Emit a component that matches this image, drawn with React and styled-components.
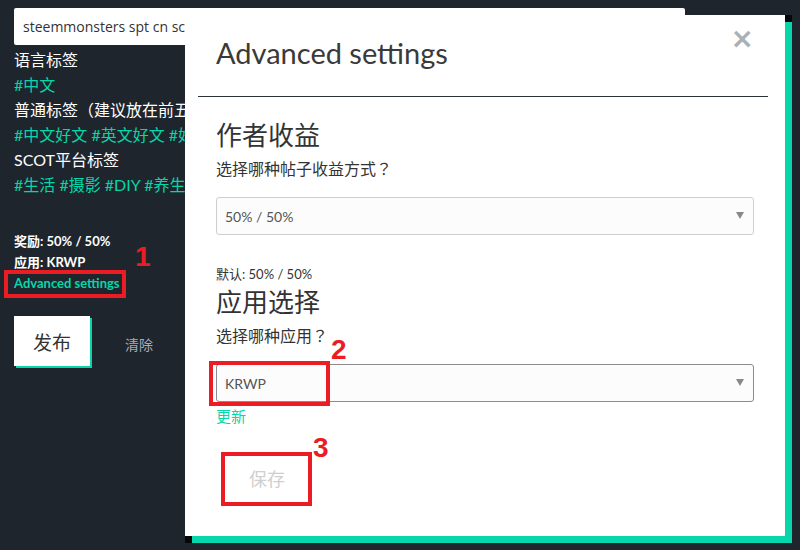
import React from 'react';
import styled, { createGlobalStyle } from 'styled-components';

const GREEN = '#06d6a9';
const RED = '#ec1c24';

const Global = createGlobalStyle`
  html, body {
    margin: 0;
    background: #1e252d;
    font-family: Lato, "Noto Sans CJK SC", sans-serif;
  }
`;

const Page = styled.div`
  position: relative;
  width: 800px;
  height: 550px;
  overflow: hidden;
  background: #1e252d;
  padding: 8px 0 0 14px;
  box-sizing: border-box;
`;

const TagInput = styled.div`
  width: 671px;
  height: 37px;
  background: #fff;
  border-radius: 2px;
  box-sizing: border-box;
  padding: 0 9px;
  display: flex;
  align-items: center;
  font-size: 14px;
  color: #333;
  font-family: "Open Sans", sans-serif;
`;

const Lines = styled.div`
  margin-top: 2px;
  display: flex;
  flex-direction: column;
`;

const Line = styled.div`
  height: 25px;
  line-height: 25px;
  font-size: 16px;
  color: ${p => (p.$tag ? GREEN : '#fff')};
  white-space: nowrap;
`;

const Meta = styled.div`
  margin-top: 34px;
  display: flex;
  flex-direction: column;
`;

const MetaLine = styled.div`
  height: 21px;
  line-height: 21px;
  font-size: 13px;
  font-weight: 700;
  color: ${p => (p.$link ? GREEN : '#fff')};
`;

const Actions = styled.div`
  margin-top: 22px;
  display: flex;
  align-items: center;
  gap: 35px;
`;

const PostButton = styled.div`
  width: 76px;
  height: 50px;
  background: #fff;
  box-shadow: 2px 2px 0 ${GREEN};
  display: flex;
  align-items: center;
  justify-content: center;
  font-size: 19px;
  color: #333;
`;

const ClearButton = styled.div`
  font-size: 14px;
  color: #aab;
  margin-top: 5px;
`;

const Modal = styled.div`
  position: absolute;
  left: 185px;
  top: 15px;
  width: 600px;
  height: 521px;
  background: #fff;
  box-shadow: 7px 7px 0 ${GREEN};
  &::before, &::after {
    content: '';
    position: absolute;
    width: 7px;
    height: 7px;
    background: #050709;
  }
  &::before { right: -7px; top: 0; }
  &::after { left: 0; bottom: -7px; }
`;

const Header = styled.div`
  height: 81px;
  padding: 0 31px;
  display: flex;
  align-items: center;
  justify-content: space-between;
  box-sizing: border-box;
`;

const Title = styled.h2`
  margin: -6px 0 0;
  font-size: 29px;
  font-weight: 400;
  color: #3a3a3a;
`;

const Close = styled.div`
  align-self: flex-start;
  margin-top: 14px;
  font-size: 28px;
  line-height: 20px;
  font-weight: 700;
  color: #a9b1b8;
  font-family: "DejaVu Sans", sans-serif;
`;

const Divider = styled.hr`
  margin: 0 17px 0 13px;
  border: 0;
  border-top: 1px solid #2b3138;
`;

const Body = styled.div`
  padding: 23px 31px 0;
  display: flex;
  flex-direction: column;
`;

const Section = styled.h3`
  margin: ${p => p.$mt || 0}px 0 0;
  font-size: 26px;
  line-height: 30px;
  font-weight: 400;
  color: #333;
`;

const Label = styled.div`
  margin-top: 9px;
  height: 20px;
  font-size: 16px;
  line-height: 20px;
  color: #333;
`;

const FullQ = styled.span`
  font-family: "Noto Sans CJK TC", sans-serif;
  line-height: 1;
`;

const Select = styled.div`
  position: relative;
  margin-top: 18px;
  height: 38px;
  box-sizing: border-box;
  border: 1px solid ${p => (p.$focus ? '#8c8c8c' : '#cfcfcf')};
  border-radius: 3px;
  background: #fcfcfc;
  display: flex;
  align-items: center;
  justify-content: space-between;
  padding: 0 9px 0 8px;
  font-size: 14px;
  color: #555;
`;

const Arrow = styled.span`
  width: 0;
  height: 0;
  border-left: 4px solid transparent;
  border-right: 4px solid transparent;
  border-top: 7px solid #888;
  margin-top: -2px;
`;

const Note = styled.div`
  margin-top: 30px;
  font-size: 13px;
  line-height: 18px;
  color: #333;
`;

const UpdateLink = styled.div`
  margin-top: 4px;
  font-size: 15px;
  line-height: 20px;
  color: ${GREEN};
`;

const SaveButton = styled.div`
  margin-top: 38px;
  margin-left: 6px;
  width: 90px;
  height: 28px;
  display: flex;
  align-items: center;
  justify-content: center;
  font-size: 18px;
  color: #cfcfcf;
`;

const Mark = styled.div`
  position: absolute;
  border: 4px solid ${RED};
  box-sizing: border-box;
  pointer-events: none;
`;

const MarkNum = styled.div`
  position: absolute;
  color: ${RED};
  font-family: "Liberation Sans", Arial, sans-serif;
  font-weight: 700;
  font-size: 28px;
  line-height: 1;
`;

export default function App() {
  return (
    <>
      <Global />
      <Page>
        <TagInput>steemmonsters spt cn sct kr cn-reader</TagInput>
        <Lines>
          <Line>语言标签</Line>
          <Line $tag>#中文</Line>
          <Line>普通标签（建议放在前五位）</Line>
          <Line $tag>#中文好文 #英文好文 #好文</Line>
          <Line>SCOT平台标签</Line>
          <Line $tag>#生活 #摄影 #DIY #养生</Line>
        </Lines>
        <Meta>
          <MetaLine>奖励: 50% / 50%</MetaLine>
          <MetaLine>应用: KRWP</MetaLine>
          <MetaLine $link>Advanced settings</MetaLine>
        </Meta>
        <Actions>
          <PostButton>发布</PostButton>
          <ClearButton>清除</ClearButton>
        </Actions>

        <Modal>
          <Header>
            <Title>Advanced settings</Title>
            <Close>×</Close>
          </Header>
          <Divider />
          <Body>
            <Section>作者收益</Section>
            <Label>选择哪种帖子收益方式<FullQ>？</FullQ></Label>
            <Select>
              <span>50% / 50%</span>
              <Arrow />
            </Select>
            <Note>默认: 50% / 50%</Note>
            <Section $mt={4}>应用选择</Section>
            <Label>选择哪种应用<FullQ>？</FullQ></Label>
            <Select $focus>
              <span>KRWP</span>
              <Arrow />
            </Select>
            <UpdateLink>更新</UpdateLink>
            <SaveButton>保存</SaveButton>
          </Body>
        </Modal>

        <Mark style={{ left: 4, top: 270, width: 122, height: 28 }} />
        <MarkNum style={{ left: 135, top: 243 }}>1</MarkNum>
        <Mark style={{ left: 209, top: 361, width: 121, height: 45 }} />
        <MarkNum style={{ left: 331, top: 336 }}>2</MarkNum>
        <Mark style={{ left: 221, top: 452, width: 91, height: 54 }} />
        <MarkNum style={{ left: 313, top: 434 }}>3</MarkNum>
      </Page>
    </>
  );
}
